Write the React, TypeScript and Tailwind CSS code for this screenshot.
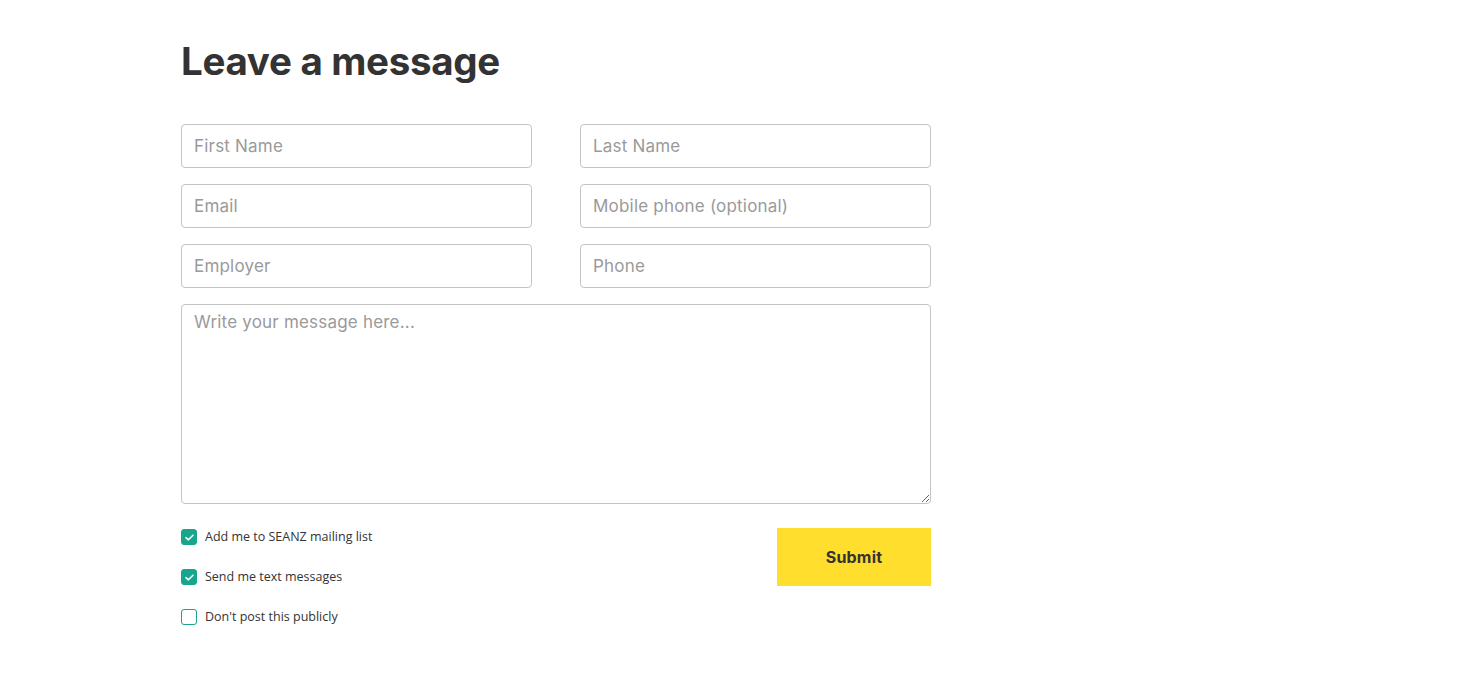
import { useState } from 'react';

const inputCls =
    'h-[44px] w-full rounded-[4px] border border-[#c4c4c4] bg-white px-3 text-[17px] tracking-[0.2px] text-[#333] placeholder:text-[#9a9a9a] outline-none font-["Inter",sans-serif]';

function Check({ label, checked, onToggle }: { label: string; checked: boolean; onToggle: () => void }) {
    return (
        <label className="flex h-[18px] items-center gap-2 cursor-pointer select-none">
            <span
                onClick={onToggle}
                className={
                    'flex h-4 w-4 items-center justify-center rounded-[3px] border ' +
                    (checked ? 'border-[#17a58c] bg-[#17a58c]' : 'border-[#17a58c] bg-white')
                }
            >
                {checked && (
                    <svg width="9" height="7" viewBox="0 0 9 7" fill="none">
                        <path d="M1 3.6 L3.4 5.8 L8 1.2" stroke="white" strokeWidth="1.6" strokeLinecap="round" strokeLinejoin="round" />
                    </svg>
                )}
            </span>
            <span className="text-[12.5px] text-[#333] font-['Open_Sans',sans-serif]">{label}</span>
        </label>
    );
}

export default function App() {
    const [mailing, setMailing] = useState(true);
    const [texts, setTexts] = useState(true);
    const [priv, setPriv] = useState(false);

    return (
        <div className="min-h-[688px] w-full bg-white">
            <div className="ml-[181px] w-[750px] pt-[37px]">
                <h1 className="text-[38.5px] font-bold leading-[48px] tracking-[-0.3px] text-[#333] font-['Inter',sans-serif]">
                    Leave a message
                </h1>
                <form className="mt-[39px] flex flex-col gap-4" onSubmit={e => e.preventDefault()}>
                    <div className="grid grid-cols-2 gap-x-12 gap-y-4">
                        <input placeholder="First Name" className={inputCls} />
                        <input placeholder="Last Name" className={inputCls} />
                        <input placeholder="Email" className={inputCls} />
                        <input placeholder="Mobile phone (optional)" className={inputCls} />
                        <input placeholder="Employer" className={inputCls} />
                        <input placeholder="Phone" className={inputCls} />
                    </div>
                    <textarea
                        placeholder="Write your message here..."
                        className='h-[200px] w-full rounded-[4px] border border-[#c4c4c4] px-3 py-[5px] text-[17px] tracking-[0.2px] text-[#333] placeholder:text-[#9a9a9a] outline-none font-["Inter",sans-serif]'
                    />
                    <div className="mt-2 flex items-start justify-between">
                        <div className="flex flex-col gap-[22px]">
                            <Check label="Add me to SEANZ mailing list" checked={mailing} onToggle={() => setMailing(!mailing)} />
                            <Check label="Send me text messages" checked={texts} onToggle={() => setTexts(!texts)} />
                            <Check label="Don't post this publicly" checked={priv} onToggle={() => setPriv(!priv)} />
                        </div>
                        <button
                            type="submit"
                            className="h-[58px] w-[154px] bg-[#ffde2e] text-[16px] font-bold tracking-[0.2px] text-[#333] font-['Inter',sans-serif]"
                        >
                            Submit
                        </button>
                    </div>
                </form>
            </div>
        </div>
    );
}
